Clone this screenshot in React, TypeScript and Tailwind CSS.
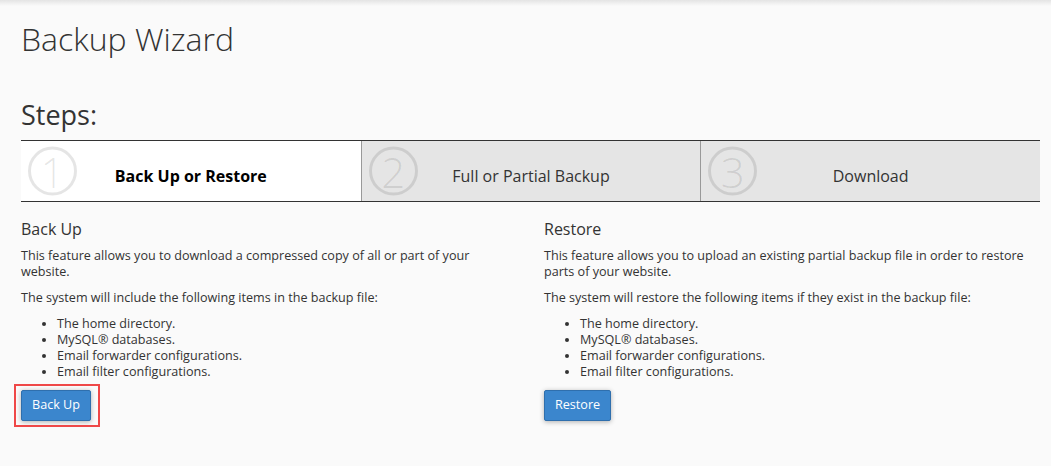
import React from 'react'

const steps = [
  { n: '1', label: 'Back Up or Restore', active: true },
  { n: '2', label: 'Full or Partial Backup', active: false },
  { n: '3', label: 'Download', active: false },
]

const items = [
  'The home directory.',
  'MySQL® databases.',
  'Email forwarder configurations.',
  'Email filter configurations.',
]

function Section({ title, intro, lead, action, highlight, className }: { title: string; intro: string; lead: string; action: string; highlight?: boolean; className?: string }) {
  return (
    <div className={className}>
      <h2 className="text-[16px] leading-[22px] mt-[2px] mb-[8px]">{title}</h2>
      <p className="text-[12.6px] leading-[16px] mb-[10px]">{intro}</p>
      <p className="text-[12.6px] leading-[16px] mb-[10px]">{lead}</p>
      <ul className="list-disc pl-[36px] text-[12.6px] leading-[16px] mb-[10px]">
        {items.map(i => <li key={i}>{i}</li>)}
      </ul>
      <div className="relative inline-block">
        <button className="h-[31px] px-[10px] bg-[#3b86cd] border border-[#2f6fad] rounded-[2px] text-white text-[12.6px] leading-none shadow-[0_1px_5px_rgba(0,0,0,0.3)]">
          {action}
        </button>
        {highlight && (
          <div className="absolute left-[-7px] right-[-9px] top-[-6px] bottom-[-6px] border-2 border-[#ef4848] pointer-events-none" />
        )}
      </div>
    </div>
  )
}

export default function App() {
  return (
    <div className="min-h-[466px] bg-[#fafafa] text-[#333] font-['Open_Sans',sans-serif]">
      <div className="h-[6px] bg-gradient-to-b from-[#e4e4e4] to-[#fafafa]" />
      <div className="pl-[21px] pr-[11px]">
        <h1 className="text-[32px] font-light leading-[44px] mt-[11px]">Backup Wizard</h1>
        <h2 className="text-[27px] leading-[38px] mt-[35px] mb-[6px]">Steps:</h2>

        <div className="grid grid-cols-3 h-[62px] border-y border-[#333]">
          {steps.map((s, idx) => (
            <div
              key={s.n}
              className={`relative flex items-center justify-center pt-[10px] ${s.active ? 'bg-white text-black font-bold' : 'bg-[#e5e5e5] text-[#333]'} ${idx > 0 ? 'border-l border-[#999]' : ''}`}
            >
              <div className="absolute left-[7px] top-1/2 -translate-y-1/2 w-[49px] h-[49px] rounded-full border-[3px] border-black/10 flex items-center justify-center text-black/10 text-[42px] font-light leading-none">
                {s.n}
              </div>
              <span className="text-[16px] leading-[22px]">{s.label}</span>
            </div>
          ))}
        </div>

        <div className="grid grid-cols-[523px_1fr] mt-[14px]">
          <Section
            className="pr-[30px]"
            title="Back Up"
            intro="This feature allows you to download a compressed copy of all or part of your website."
            lead="The system will include the following items in the backup file:"
            action="Back Up"
            highlight
          />
          <Section
            title="Restore"
            intro="This feature allows you to upload an existing partial backup file in order to restore parts of your website."
            lead="The system will restore the following items if they exist in the backup file:"
            action="Restore"
          />
        </div>
      </div>
    </div>
  )
}
